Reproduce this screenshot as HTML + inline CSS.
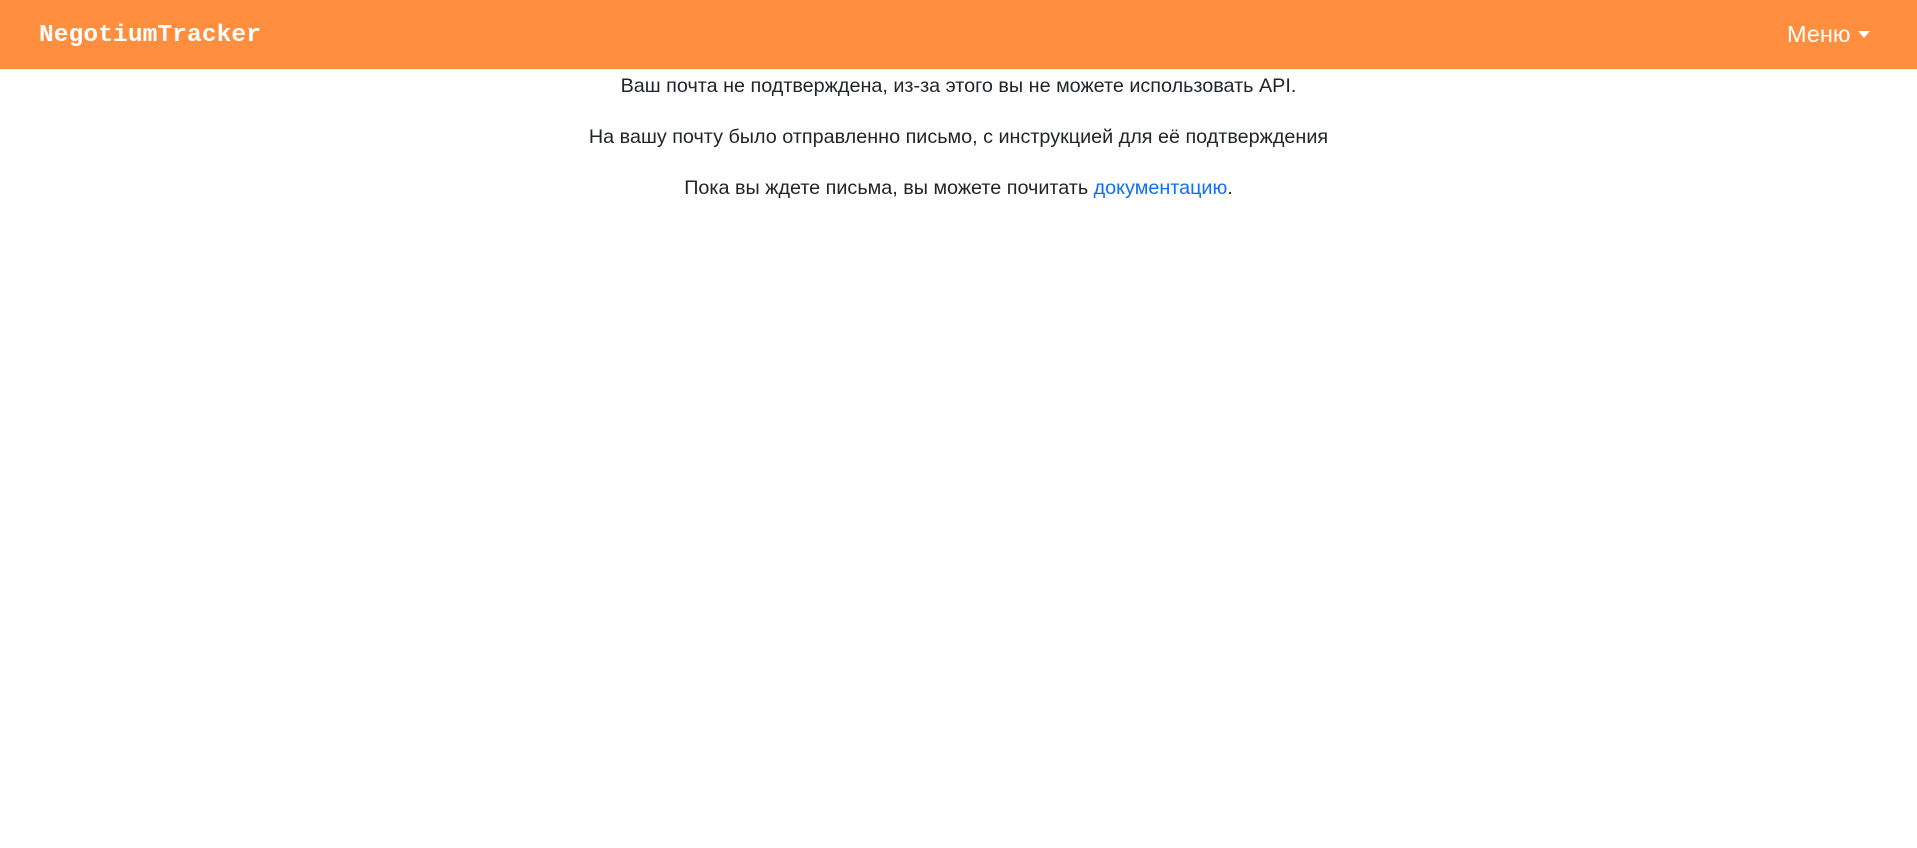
<!DOCTYPE html>
<html><head><meta charset="utf-8"><style>
html,body{margin:0;padding:0;background:#fff;width:1917px;height:848px;overflow:hidden}
nav{height:69px;background:#ff8f3f;position:relative}
.brand{position:absolute;left:39px;top:19px;font:bold 24.5px "Liberation Mono",monospace;color:#fff;line-height:34px;letter-spacing:0.1px}
.menu{position:absolute;left:1787px;top:18px;font:23.5px "Liberation Sans",sans-serif;color:#fff;line-height:32px}
.caret{position:absolute;left:1858px;top:31px;width:0;height:0;border-left:6px solid transparent;border-right:6px solid transparent;border-top:7px solid #fff}
p{margin:0;position:absolute;left:0;width:1917px;text-align:center;font:19.8px "Liberation Sans",sans-serif;color:#212529;line-height:28px}
a{color:#0d6efd;text-decoration:none}
</style></head><body>
<nav><div class="brand">NegotiumTracker</div><div class="menu">Меню</div><div class="caret"></div></nav>
<p style="top:72px">Ваш почта не подтверждена, из-за этого вы не можете использовать API.</p>
<p style="top:123px">На вашу почту было отправленно письмо, с инструкцией для её подтверждения</p>
<p style="top:174px">Пока вы ждете письма, вы можете почитать <a>документацию</a>.</p>
</body></html>
